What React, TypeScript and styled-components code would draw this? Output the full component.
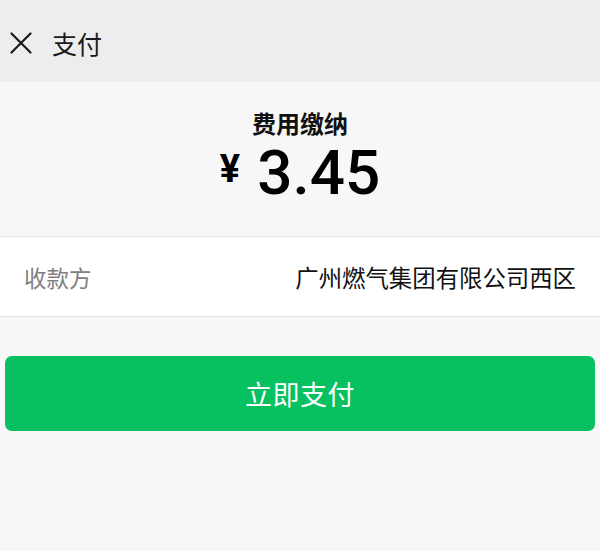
import React from "react";
import styled, { createGlobalStyle } from "styled-components";

const GlobalStyle = createGlobalStyle`
  html, body {
    margin: 0;
    padding: 0;
    background: #f7f7f7;
  }
  body {
    font-family: "Noto Sans CJK SC", "Noto Sans", sans-serif;
  }
`;

const Page = styled.div`
  width: 600px;
  height: 551px;
  background: #f7f7f7;
  display: flex;
  flex-direction: column;
  overflow: hidden;
`;

const Header = styled.div`
  height: 82px;
  background: #ededed;
  display: flex;
  align-items: center;
  padding: 4px 0 0 10px;
  gap: 20px;
  box-sizing: border-box;
`;

const CloseIcon = styled.svg`
  width: 22px;
  height: 22px;
  flex-shrink: 0;
`;

const Title = styled.div`
  font-size: 25px;
  color: #1a1a1a;
  line-height: 1;
`;

const Summary = styled.div`
  display: flex;
  flex-direction: column;
  align-items: center;
  padding-top: 26px;
  height: 155px;
  box-sizing: border-box;
  border-bottom: 1px solid #e3e3e3;
`;

const Caption = styled.div`
  font-size: 24px;
  font-weight: 700;
  color: #111;
  line-height: 30px;
`;

const Amount = styled.div`
  display: flex;
  align-items: center;
  gap: 17px;
  margin-top: 4px;
  color: #000;
  line-height: 1;
`;

const Currency = styled.span`
  font-family: Roboto, "Noto Sans", sans-serif;
  font-size: 38px;
  font-weight: 700;
  margin-bottom: 8px;
`;

const Figure = styled.span`
  font-family: Roboto, "Noto Sans", sans-serif;
  font-size: 62px;
  font-weight: 500;
`;

const Row = styled.div`
  height: 80px;
  background: #fff;
  border-bottom: 1px solid #e3e3e3;
  display: flex;
  align-items: center;
  justify-content: space-between;
  padding: 0 24px;
  box-sizing: border-box;
`;

const Label = styled.span`
  font-size: 22.5px;
  color: #808080;
`;

const Value = styled.span`
  font-size: 23.4px;
  color: #111;
`;

const Actions = styled.div`
  padding: 39px 5px 0;
`;

const PayButton = styled.button`
  width: 100%;
  height: 75px;
  border: none;
  border-radius: 7px;
  background: #07c160;
  color: #fff;
  font-family: inherit;
  font-size: 27px;
  letter-spacing: 0.5px;
  cursor: pointer;
`;

export default function App() {
  return (
    <Page>
      <GlobalStyle />
      <Header>
        <CloseIcon viewBox="0 0 22 22" fill="none">
          <path d="M1.5 1.5L20.5 20.5M20.5 1.5L1.5 20.5" stroke="#1a1a1a" strokeWidth="2.2" strokeLinecap="round" />
        </CloseIcon>
        <Title>支付</Title>
      </Header>
      <Summary>
        <Caption>费用缴纳</Caption>
        <Amount>
          <Currency>¥</Currency>
          <Figure>3.45</Figure>
        </Amount>
      </Summary>
      <Row>
        <Label>收款方</Label>
        <Value>广州燃气集团有限公司西区</Value>
      </Row>
      <Actions>
        <PayButton>立即支付</PayButton>
      </Actions>
    </Page>
  );
}
